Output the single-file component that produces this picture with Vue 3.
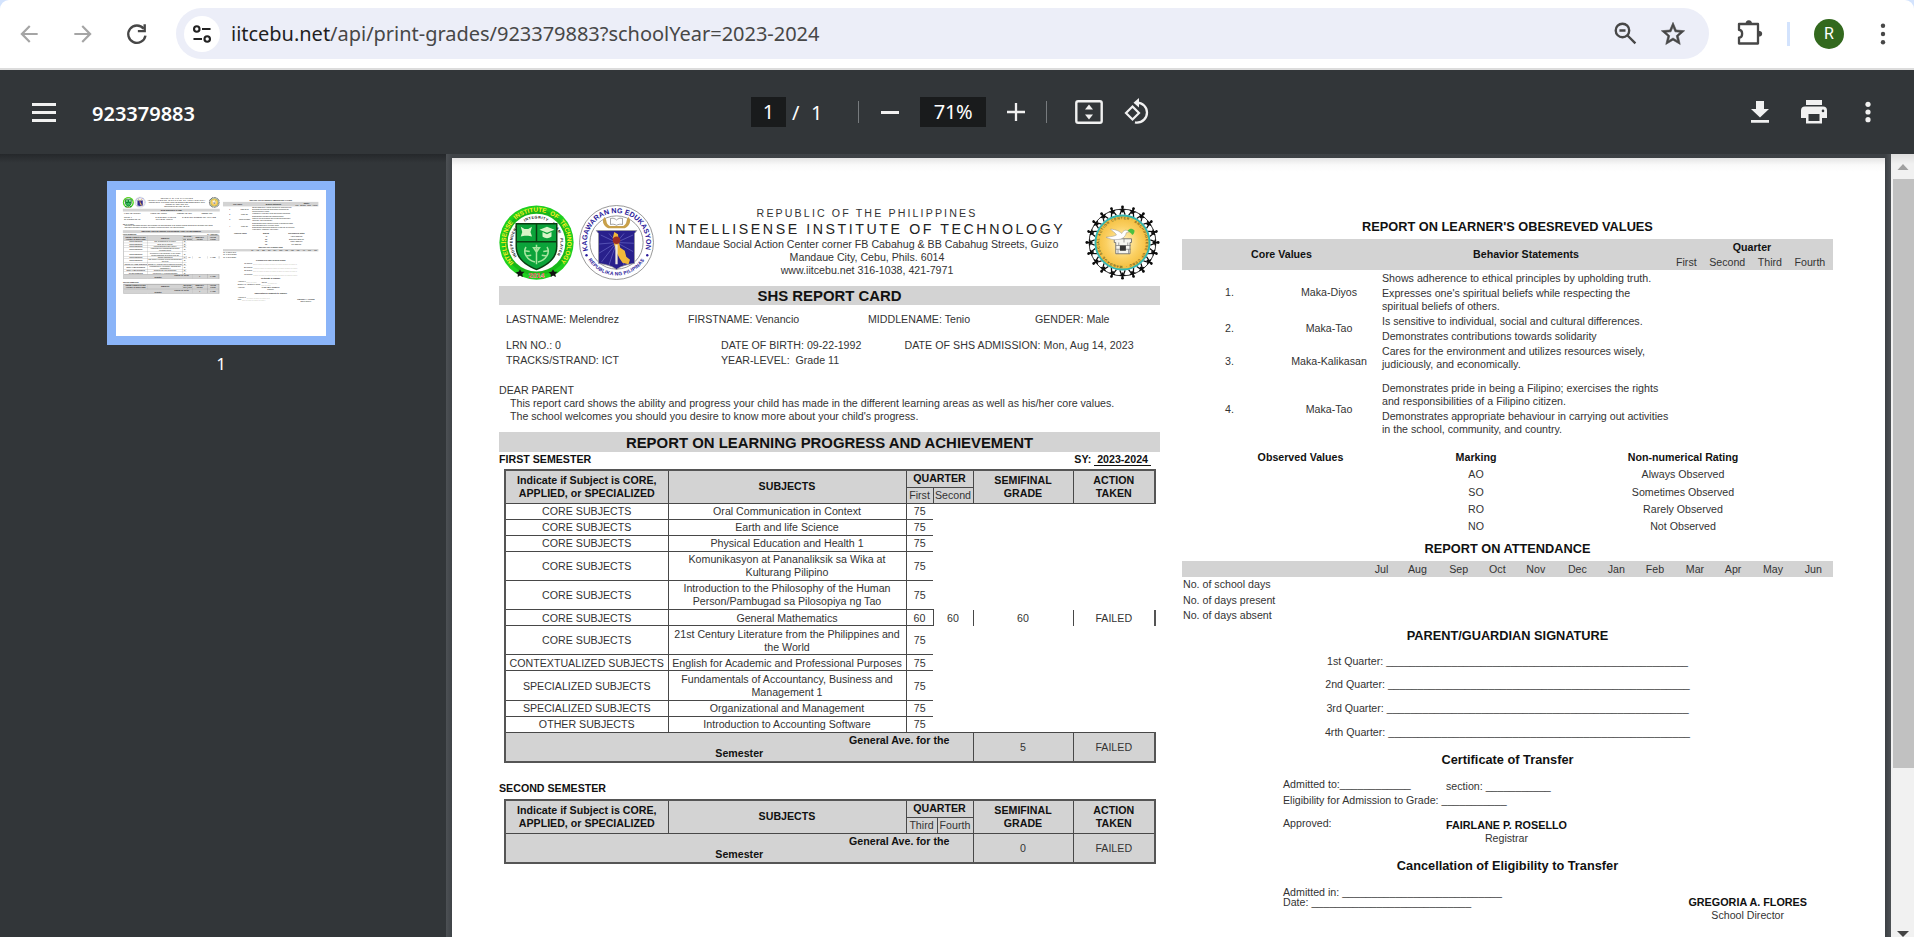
<script setup>
const views = ['thumb', 'main']

const valuesRows = [
  { no: '1.', name: 'Maka-Diyos', groups: [['Shows adherence to ethical principles by upholding truth.'], ["Expresses one's spiritual beliefs while respecting the", 'spiritual beliefs of others.']] },
  { no: '2.', name: 'Maka-Tao', groups: [['Is sensitive to individual, social and cultural differences.'], ['Demonstrates contributions towards solidarity']] },
  { no: '3.', name: 'Maka-Kalikasan', groups: [['Cares for the environment and utilizes resources wisely,', 'judiciously, and economically.']] },
  { no: '4.', name: 'Maka-Tao', groups: [['Demonstrates pride in being a Filipino; exercises the rights', 'and responsibilities of a Filipino citizen.'], ['Demonstrates appropriate behaviour in carrying out activities', 'in the school, community, and country.']] }
]
const ratings = [['AO', 'Always Observed'], ['SO', 'Sometimes Observed'], ['RO', 'Rarely Observed'], ['NO', 'Not Observed']]
const months = ['Jul', 'Aug', 'Sep', 'Oct', 'Nov', 'Dec', 'Jan', 'Feb', 'Mar', 'Apr', 'May', 'Jun']
const line = (n) => '_'.repeat(n)
const signatures = ['1st Quarter:', '2nd Quarter:', '3rd Quarter:', '4rth Quarter:']

const semesters = [
  {
    title: 'FIRST SEMESTER', sy: '2023-2024', q: ['First', 'Second'], cls: 'first', ave: '5',
    rows: [
      ['CORE SUBJECTS', 'Oral Communication in Context', 75],
      ['CORE SUBJECTS', 'Earth and life Science', 75],
      ['CORE SUBJECTS', 'Physical Education and Health 1', 75],
      ['CORE SUBJECTS', 'Komunikasyon at Pananaliksik sa Wika at Kulturang Pilipino', 75, 'tall'],
      ['CORE SUBJECTS', 'Introduction to the Philosophy of the Human Person/Pambugad sa Pilosopiya ng Tao', 75, 'tall'],
      ['CORE SUBJECTS', 'General Mathematics', 60, 'full'],
      ['CORE SUBJECTS', '21st Century Literature from the Philippines and the World', 75, 'tall'],
      ['CONTEXTUALIZED SUBJECTS', 'English for Academic and Professional Purposes', 75],
      ['SPECIALIZED SUBJECTS', 'Fundamentals of Accountancy, Business and Management 1', 75, 'tall'],
      ['SPECIALIZED SUBJECTS', 'Organizational and Management', 75],
      ['OTHER SUBJECTS', 'Introduction to Accounting Software', 75]
    ]
  },
  { title: 'SECOND SEMESTER', sy: '', q: ['Third', 'Fourth'], cls: 'second', ave: '0', rows: [] }
]
</script>

<template>
  <div class="window">
    <header class="browser">
      <svg class="ic back" viewBox="0 0 24 24"><path d="M20 11H7.8l5.6-5.6L12 4l-8 8 8 8 1.4-1.4L7.8 13H20z" /></svg>
      <svg class="ic fwd" viewBox="0 0 24 24"><path d="M4 11h12.2l-5.6-5.6L12 4l8 8-8 8-1.4-1.4 5.6-5.6H4z" /></svg>
      <svg class="ic reload" viewBox="0 0 24 24"><path d="M18.2 7.2A8 8 0 1 0 19.8 13.5" fill="none" stroke="#474747" stroke-width="2.2" /><path d="M20.2 3v7.4h-7.4V8.3h5.2V3z" /></svg>
      <div class="omnibox">
        <span class="site">
          <svg viewBox="0 0 24 24"><g fill="none" stroke="#222" stroke-width="2.3"><circle cx="6.3" cy="6.5" r="3" /><circle cx="17.7" cy="17.5" r="3" /><path d="M12 6.5h9.3M2.7 17.5H12" /></g></svg>
        </span>
        <span class="url"><b>iitcebu.net</b>/api/print-grades/923379883?schoolYear=2023-2024</span>
        <svg class="ic mag" viewBox="0 0 24 24"><g fill="none" stroke="#474747" stroke-width="2.1"><circle cx="9.3" cy="9.3" r="6" /><path d="M13.8 13.8l7 7M6.6 9.3H12" /></g></svg>
        <svg class="ic star" viewBox="0 0 24 24"><path d="M22 9.2l-7.2-.6L12 2 9.2 8.6 2 9.2l5.5 4.7L5.8 21 12 17.3l6.2 3.7-1.6-7.1zM12 15.4l-3.8 2.3 1-4.3-3.3-2.9 4.4-.4L12 6.1l1.7 4 4.4.4-3.3 2.9 1 4.3z" stroke="#474747" stroke-width=".5" /></svg>
      </div>
      <svg class="ic puzzle" viewBox="0 0 28 28"><path d="M3 4H22V23.500H3V17.600C7.200 17.600 7.200 9.900 3 9.900Z" fill="none" stroke="#474747" stroke-width="2.300" stroke-linejoin="round" /><path d="M9.600 4a3.200 3.700 0 0 1 6.400 0zM22 10.800a4.200 3 0 0 1 0 6z" /></svg>
      <span class="bsep"></span>
      <span class="avatar">R</span>
      <svg class="ic bdots" viewBox="0 0 6 24"><circle cx="3" cy="3.800" r="2.200" /><circle cx="3" cy="12" r="2.200" /><circle cx="3" cy="20.200" r="2.200" /></svg>
    </header>

    <div class="toolbar">
      <span class="menu"><i></i><i></i><i></i></span>
      <span class="doc-title">923379883</span>
      <span class="box page-no">1</span>
      <span class="slash">/</span>
      <span class="count">1</span>
      <span class="tsep s1"></span>
      <span class="minus"></span>
      <span class="box zoom">71%</span>
      <svg class="plus" viewBox="0 0 18 18"><path d="M9 0v18M0 9h18" stroke="#f1f1f1" stroke-width="2.300" /></svg>
      <span class="tsep s2"></span>
      <svg class="fit" viewBox="0 0 28 24"><rect x="1.300" y="1.300" width="25.400" height="21.400" rx="1.800" fill="none" stroke="#f1f1f1" stroke-width="2.400" /><path d="M14 4.500l4 5h-8zM14 19.500l4-5h-8z" fill="#f1f1f1" /></svg>
      <svg class="rotate" viewBox="0 0 27 27"><path d="M8.500 8.500L15 15l-6.500 6.500L2 15z" fill="none" stroke="#f1f1f1" stroke-width="2.200" /><path d="M13 4.600a10 10 0 0 1 0 20M16.200 24.200a10 10 0 0 1-5.200 .1" fill="none" stroke="#f1f1f1" stroke-width="2.300" /><path d="M15 0v9.400L9.500 4.700z" fill="#f1f1f1" /></svg>
      <svg class="down" viewBox="0 0 18 22"><path d="M18 8h-5V0H5v8H0l9 8.500zM0 19h18v2.700H0z" fill="#f1f1f1" /></svg>
      <svg class="print" viewBox="0 0 26 24"><path d="M5 0h16v5H5zM22 6.500H4a4 4 0 0 0-4 4V18h5v5.500h16V18h5v-7.500a4 4 0 0 0-4-4zM18.500 21h-11v-7h11zM22 12.200a1.300 1.300 0 1 1 0-2.600 1.300 1.300 0 0 1 0 2.600z" fill="#f1f1f1" fill-rule="evenodd" /></svg>
      <svg class="tdots" viewBox="0 0 6 22"><g fill="#f1f1f1"><circle cx="3" cy="3.300" r="2.600" /><circle cx="3" cy="11" r="2.600" /><circle cx="3" cy="18.700" r="2.600" /></g></svg>
    </div>

    <div class="body">
      <div v-for="v in views" :key="v" :class="['pane', v]">
        <div class="frame">
          <div class="sheet">
            <section class="left">
              <div class="head">
                <svg class="logo" viewBox="0 0 100 100">
                  <defs>
                    <path :id="v + 'a'" d="M19.500 77.400A41 41 0 1 1 80.500 77.400" />
                    <path :id="v + 'b'" d="M23.800 68.400A32 32 0 1 1 76.200 68.400" />
                  </defs>
                  <circle cx="50" cy="50" r="49.500" fill="#1fd01f" />
                  <circle cx="50" cy="50" r="41" fill="none" stroke="#18b818" stroke-width="6" />
                  <circle cx="50" cy="50" r="38.500" fill="#fff" />
                  <text class="ring" font-size="8.400" fill="#ffee22" word-spacing="3"><textPath :href="'#' + v + 'a'" textLength="187">INTELLISENSE INSTITUTE OF TECHNOLOGY</textPath></text>
                  <text class="ring" font-size="5" fill="#111" word-spacing="4"><textPath :href="'#' + v + 'b'" textLength="137">INDEPENDENCE INTEGRITY TEAM PLAYER</textPath></text>
                  <path d="M22 24h56v31c0 18-14 26-28 32-14-6-28-14-28-32z" fill="#0a3d12" />
                  <path d="M24 26h25v22H24zM51 26h25v22H51zM24 50h52v5c0 16-12 24-26 30-14-6-26-14-26-30z" fill="#0ba33a" />
                  <path d="M29 29l5 3h5l5-3-2 7 2 6-5-1h-5l-5 1 2-6zM54 33l10-4 10 4-10 4zM58 36v6c4 3 8 3 12 0v-6l-6 3z" fill="#d8f5c8" />
                  <path d="M50 53v26M46 57h8l-4 6zM36 56c-5 8 2 18 12 20M64 56c5 8-2 18-12 20M34 61l7 1M36 68l7-1M66 61l-7 1M64 68l-7-1" fill="none" stroke="#a8e6a0" stroke-width="2" />
                  <text x="50" y="97" text-anchor="middle" class="ring" font-size="9.500" fill="#e02020" stroke="#fff" stroke-width=".3">2014</text>
                  <path d="M28 86l2 3 4 0-3 3 1 4-4-2-3 2 0-4-3-2 4-1zM72 86l2 3 4 0-3 3 1 4-4-2-3 2 0-4-3-2 4-1z" fill="#111" />
                </svg>
                <svg class="logo second-logo" viewBox="0 0 100 100">
                  <defs>
                    <path :id="v + 'c'" d="M12 61A39.500 39.500 0 1 1 88 61" />
                    <path :id="v + 'd'" d="M12.500 73A44 44 0 0 0 87.500 73" />
                  </defs>
                  <circle cx="50" cy="50" r="49.300" fill="#fff" stroke="#777" stroke-width="1" />
                  <circle cx="50" cy="50" r="35.500" fill="none" stroke="#777" stroke-width="1" />
                  <text class="ring" font-size="9.500" fill="#2a1a9a"><textPath :href="'#' + v + 'c'" textLength="144">KAGAWARAN NG EDUKASYON</textPath></text>
                  <text class="ring" font-size="6.600" fill="#2a1a9a"><textPath :href="'#' + v + 'd'" textLength="89">REPUBLIKA NG PILIPINAS</textPath></text>
                  <circle cx="10" cy="67" r="1.600" fill="#2a1a9a" /><circle cx="91" cy="67" r="1.600" fill="#2a1a9a" />
                  <path d="M23 34h54l-3 4v40c-9 1-18 3-24 8-6-5-15-7-24-8V38z" fill="#28208c" stroke="#999" stroke-width="1" />
                  <path d="M50 50L29 40M50 50L40 38M50 50L60 38M50 50L72 40M50 50L27 52M50 50L27 64M50 50L30 76M50 50L40 80M50 50L60 80M50 50L72 62M50 50L73 51" stroke="#7272cc" stroke-width=".8" />
                  <path d="M47 36l5 3 1 10 2 8 6 4 2 8 5 4-2 6-8-2-4-6-4-8-3-10-2-9z" fill="#f0b93a" />
                  <circle cx="50" cy="47" r="5" fill="#9c2f25" /><path d="M48.500 53h3v26h-3z" fill="#ece7e0" />
                  <path d="M34 16c4 4 1 9 7 12h18c6-3 3-8 7-12 5 6 0 13-5 15H39c-5-2-10-9-5-15z" fill="#c8a04a" />
                  <path d="M42 18c3-1 6 0 8 2 2-2 5-3 8-2v8c-3-1-6 0-8 1-2-1-5-2-8-1z" fill="#fff" stroke="#666" stroke-width=".8" />
                </svg>
                <div class="school">
                  <p class="republic">REPUBLIC OF THE PHILIPPINES</p>
                  <p class="iit">INTELLISENSE INSTITUTE OF TECHNOLOGY</p>
                  <p class="addr">Mandaue Social Action Center corner FB Cabahug &amp; BB Cabahug Streets, Guizo</p>
                  <p>Mandaue City, Cebu, Phils. 6014</p>
                  <p>www.iitcebu.net 316-1038, 421-7971</p>
                </div>
                <svg class="logo third-logo" viewBox="0 0 100 100">
                  <defs>
                    <radialGradient :id="v + 'g'"><stop offset="0" stop-color="#fff6cf" /><stop offset=".6" stop-color="#fbd062" /><stop offset="1" stop-color="#f3bd3c" /></radialGradient>
                    <path :id="v + 'e'" d="M50 81A31 31 0 1 1 50.100 81" />
                  </defs>
                  <circle cx="50" cy="50" r="44.500" fill="none" stroke="#222" stroke-width="1.200" />
                  <g v-for="n in 20" :key="n" :transform="`rotate(${n * 18} 50 50)`">
                    <path d="M50 3.500L46.500 13M50 3.500L53.500 13M50 4v6M46 6L50 7 54 6" stroke="#0c0c0c" stroke-width="1.700" fill="none" /><circle cx="50" cy="2.500" r="1.900" fill="#0c0c0c" />
                  </g>
                  <circle cx="50" cy="50" r="36" :fill="`url(#${v}g)`" stroke="#35b5ae" stroke-width="2.600" />
                  <text class="ring" font-size="4.600" fill="#6b5a1a"><textPath :href="'#' + v + 'e'" textLength="190">MANDAUE SOCIAL ACTION CENTER · ARCHDIOCESE OF CEBU ·</textPath></text>
                  <path d="M39 45h23v5h-2v15H41V50h-2z" fill="#f5f5f0" stroke="#666" stroke-width="1.100" />
                  <path d="M41 54h20M41 59h20M45 50v4M52 45v5M57 50v4M44 59v6M58 59v6" stroke="#777" stroke-width=".9" />
                  <path d="M46.500 54h8v7h-8z" fill="#333" />
                  <path d="M28 43c7-1 10-1 14-3-2-4-6-5-8-8 8 1 12 3 15 6 2-4 5-5 7-4l3 2-4 1c-1 6-6 9-12 9-6 1-10-1-15-3z" fill="#fff" stroke="#999" stroke-width=".7" />
                  <path d="M57 34c3-3 6-3 9 0 0 3-1 5-3 6-1-3-4-3-6-6z" fill="#4bc041" />
                </svg>
              </div>
              <h2 class="bar">SHS REPORT CARD</h2>
              <div class="names"><span>LASTNAME: Melendrez</span><span>FIRSTNAME: Venancio</span><span>MIDDLENAME: Tenio</span><span>GENDER: Male</span></div>
              <div class="info"><span>LRN NO.: 0</span><span>DATE OF BIRTH: 09-22-1992</span><span class="adm">DATE OF SHS ADMISSION: Mon, Aug 14, 2023</span><span>TRACKS/STRAND: ICT</span><span>YEAR-LEVEL:&nbsp; Grade 11</span></div>
              <div class="dear">
                <p>DEAR PARENT</p>
                <p class="ind">This report card shows the ability and progress your child has made in the different learning areas as well as his/her core values.</p>
                <p class="ind">The school welcomes you should you desire to know more about your child's progress.</p>
              </div>
              <h2 class="bar bar2">REPORT ON LEARNING PROGRESS AND ACHIEVEMENT</h2>
              <div v-for="s in semesters" :key="s.title" :class="['semester', s.cls]">
                <div class="sem-head"><b>{{ s.title }}</b><b v-if="s.sy">SY: <u>&nbsp;{{ s.sy }}&nbsp;</u></b></div>
                <table>
                  <colgroup><col class="c1" /><col class="c2" /><col class="c3" /><col class="c4" /><col class="c5" /><col class="c6" /></colgroup>
                  <tbody>
                    <tr class="h1">
                      <th rowspan="2">Indicate if Subject is CORE,<br />APPLIED, or SPECIALIZED</th>
                      <th rowspan="2">SUBJECTS</th>
                      <th colspan="2">QUARTER</th>
                      <th rowspan="2">SEMIFINAL<br />GRADE</th>
                      <th rowspan="2" class="last">ACTION<br />TAKEN</th>
                    </tr>
                    <tr class="h2"><td v-for="q in s.q" :key="q" class="grey">{{ q }}</td></tr>
                    <tr v-for="r in s.rows" :key="r[1]" :class="['row', r[3]]">
                      <td class="kind">{{ r[0] }}</td>
                      <td>{{ r[1] }}</td>
                      <td class="q1">{{ r[2] }}</td>
                      <template v-if="r[3] === 'full'"><td class="v">60</td><td class="v">60</td><td class="v last">FAILED</td></template>
                      <td v-else colspan="3" class="none"></td>
                    </tr>
                    <tr class="ave">
                      <th colspan="4"><span class="gen">General Ave. for the</span><br />Semester</th>
                      <td class="grey">{{ s.ave }}</td>
                      <td class="grey last">FAILED</td>
                    </tr>
                  </tbody>
                </table>
              </div>
            </section>

            <section class="right">
              <h3 class="t-values">REPORT ON LEARNER'S OBESREVED VALUES</h3>
              <div class="vhead">
                <b>Core Values</b><b>Behavior Statements</b>
                <div class="quarter"><b>Quarter</b><div><span>First</span><span>Second</span><span>Third</span><span>Fourth</span></div></div>
              </div>
              <div class="vrows">
                <div v-for="(r, i) in valuesRows" :key="i" :class="['vrow', 'r' + i]">
                  <span class="no">{{ r.no }}</span><span class="nm">{{ r.name }}</span>
                  <div class="st"><div v-for="(g, j) in r.groups" :key="j" class="grp"><p v-for="t in g" :key="t">{{ t }}</p></div></div>
                </div>
              </div>
              <div class="rating"><b>Observed Values</b><b>Marking</b><b>Non-numerical Rating</b></div>
              <div v-for="r in ratings" :key="r[0]" class="rating item"><span></span><span>{{ r[0] }}</span><span>{{ r[1] }}</span></div>
              <h3 class="t-att">REPORT ON ATTENDANCE</h3>
              <div class="months"><i></i><span v-for="m in months" :key="m">{{ m }}</span></div>
              <div class="days"><p>No. of school days</p><p>No. of days present</p><p>No. of days absent</p></div>
              <h3 class="t-sig">PARENT/GUARDIAN SIGNATURE</h3>
              <div class="sigs"><p v-for="q in signatures" :key="q">{{ q }} {{ line(51) }}</p></div>
              <h3 class="t-cert">Certificate of Transfer</h3>
              <div class="cert">
                <span>Admitted to:{{ line(12) }}</span><span class="sec">section: {{ line(11) }}</span>
                <span class="elig">Eligibility for Admission to Grade: {{ line(11) }}</span>
                <span class="appr">Approved:</span>
                <div class="person"><b>FAIRLANE P. ROSELLO</b><p>Registrar</p></div>
              </div>
              <h3 class="t-cancel">Cancellation of Eligibility to Transfer</h3>
              <div class="cancel">
                <div><p>Admitted in: {{ line(27) }}</p><p class="date">Date: {{ line(27) }}</p></div>
                <div class="person director"><b>GREGORIA A. FLORES</b><p>School Director</p></div>
              </div>
            </section>
          </div>
        </div>
        <div v-if="v === 'thumb'" class="thumb-no">1</div>
      </div>
      <div class="scroll">
        <svg class="up" viewBox="0 0 23 24"><path d="M12 10l5.500 6h-11z" fill="#a0a0a0" /></svg>
        <div class="grip"></div>
        <svg class="dn" viewBox="0 0 23 7"><path d="M6 1h12l-6 6z" fill="#444" /></svg>
      </div>
    </div>
  </div>
</template>

<style>
html, body { margin: 0; overflow: hidden; }
</style>

<style scoped>
* { box-sizing: border-box; }
p, h2, h3 { margin: 0; }
svg { display: block; flex: none; overflow: visible; }
.window { width: 1914px; height: 937px; display: flex; flex-direction: column; overflow: hidden; background: #d3e3fd; font-family: "Liberation Sans", Arial, sans-serif; }

.browser { height: 70px; flex: none; background: #fff; border-bottom: 2px solid #dcdcdc; border-radius: 9px 9px 0 0; display: flex; align-items: center; padding-bottom: 1px; font-family: "Noto Sans", sans-serif; }
.ic { width: 28px; height: 28px; fill: #474747; }
.back, .fwd { width: 26px; height: 26px; fill: #a5a5a5; }
.back { margin-left: 16px; }
.fwd { margin-left: 28px; }
.reload { width: 26px; height: 26px; margin-left: 28px; }
.omnibox { width: 1533px; height: 51px; margin-left: 26px; border-radius: 26px; background: #eceef8; display: flex; align-items: center; }
.site { width: 36px; height: 36px; margin-left: 8px; border-radius: 50%; background: #fff; display: grid; place-items: center; }
.site svg { width: 22px; height: 22px; }
.url { margin-left: 11px; width: 1365px; font-size: 20px; letter-spacing: -.02px; color: #474747; white-space: nowrap; }
.url b { font-weight: 400; color: #1f1f1f; }
.mag { margin-left: 16px; width: 27px; height: 27px; }
.star { margin-left: 20px; width: 28px; height: 28px; }
.puzzle { margin-left: 27px; }
.bsep { width: 3px; height: 24px; margin-left: 23px; background: #d3e3fd; }
.avatar { width: 30px; height: 30px; margin-left: 24px; border-radius: 50%; background: #33691e; color: #fff; font: 16px/30px Roboto, sans-serif; text-align: center; }
.bdots { width: 6px; height: 24px; margin-left: 36px; }

.toolbar { height: 84px; flex: none; display: flex; align-items: center; color: #fff; background: #323639; font: 20px/30px "Noto Sans", sans-serif; }
.menu { width: 24px; margin-left: 32px; display: flex; flex-direction: column; gap: 5px; }
.menu i { height: 3px; background: #f1f1f1; }
.doc-title { width: 659px; margin-left: 36px; font-weight: 600; margin-top: 3px; }
.box { height: 30px; background: #191b1c; text-align: center; }
.page-no { width: 35px; }
.slash { margin-left: 6px; width: 19px; margin-top: 2px; }
.count { width: 13px; margin-top: 2px; }
.tsep { width: 1px; height: 22px; background: #777b7e; }
.s1 { margin-left: 34px; }
.minus { width: 18px; height: 3px; margin-left: 22px; background: #f1f1f1; }
.zoom { width: 66px; margin-left: 21px; letter-spacing: -.4px; }
.plus { width: 18px; height: 18px; margin-left: 21px; }
.s2 { margin-left: 21px; }
.fit { width: 28px; height: 24px; margin-left: 28px; }
.rotate { width: 27px; height: 27px; margin: 0 0 2px 21px; }
.down { width: 18px; height: 22px; margin-left: 600px; }
.print { width: 26px; height: 24px; margin-left: 32px; }
.tdots { width: 6px; height: 22px; margin-left: 38px; }

.body { flex: 1; min-height: 0; display: flex; background: #323639; }
.pane { overflow: hidden; }
.thumb { width: 446px; flex: none; padding: 27px 0 0 107px; background: linear-gradient(#25282b, #323639 9px); }
.thumb .frame { width: 228px; height: 164px; border: 9px solid #8ab4f8; background: #fff; overflow: hidden; }
.thumb .sheet { transform: scale(.14655); transform-origin: 0 0; color: #000; }
.thumb-no { width: 228px; margin-top: 7px; text-align: center; color: #fff; font: 17px/24px "Noto Sans", sans-serif; }
.main { width: 1445px; flex: none; padding: 4px 6px 0; background: linear-gradient(90deg, #4d5155, #3f4347 6px, #3c4044 1439px, #4d5155); }
.main .sheet { background: linear-gradient(#e4e4e4, #fafafa 7px, #fff 14px); }
.sheet { width: 1433px; height: 996px; display: flex; padding: 47px 0 0 47px; background: #fff; color: #333; font-size: 10.65px; line-height: 13px; white-space: nowrap; }
.scroll { flex: none; width: 23px; background: #f1f1f1; display: flex; flex-direction: column; }
.up { width: 23px; height: 24px; background: linear-gradient(#ddd, #f1f1f1 10px); }
.grip { height: 589px; margin: 1px 0 0 2px; background: #c1c1c1; }
.dn { width: 23px; height: 7px; margin-top: auto; }

.left { width: 661px; }
.right { width: 651px; margin-left: 22px; }
.head { height: 81px; display: flex; }
.logo { width: 75px; height: 75px; }
.second-logo { margin-left: 5px; }
.ring { font-family: "Liberation Sans", Arial, sans-serif; font-weight: 700; }
.school { flex: 1; margin-right: 5px; padding-top: .6px; text-align: center; display: flex; flex-direction: column; align-items: center; }
.republic { line-height: 14px; letter-spacing: 2.120px; }
.iit { font-size: 14.200px; line-height: 18px; letter-spacing: 2.570px; color: #222; }
.bar { height: 19px; background: #d3d3d3; text-align: center; font-size: 14.920px; line-height: 20px; color: #111; }
.names { height: 27px; padding: 1px 0 0 7px; display: grid; grid-template-columns: 182px 180px 167px 1fr; align-items: center; }
.info { margin-top: 6px; padding-left: 7px; display: grid; grid-template-columns: 215px 183.500px 1fr; grid-auto-rows: 15px; align-items: center; }
.adm { letter-spacing: .04px; }
.dear { margin-top: 16px; }
.ind { padding-left: 11px; }
.bar2 { margin-top: 9px; height: 20px; line-height: 21px; }
.sem-head { height: 13px; display: flex; justify-content: space-between; padding-right: 9px; line-height: 14px; }
.sem-head b { color: #111; }
.sem-head u { text-decoration: none; display: inline-block; height: 14px; border-bottom: 1px solid #111; }
.second { margin-top: 18px; }
.semester table { margin: 4px 0 0 5px; width: 650px; table-layout: fixed; border-collapse: collapse; font-size: 10.65px; line-height: 13px; color: inherit; text-align: center; }
.second .sem-head { margin-bottom: 5px; }
.c1 { width: 163px; } .c2 { width: 238px; } .c3 { width: 27px; } .c4 { width: 40px; } .c5 { width: 100px; } .c6 { width: 82px; }
.second .c3 { width: 31px; } .second .c4 { width: 36px; }
td, th { padding: 0; border: 1px solid #484848; white-space: normal; overflow: hidden; }
td { height: 16px; }
th { background: #d3d3d3; color: #111; }
.grey { background: #d3d3d3; }
.kind { white-space: nowrap; }
.h1 th { border-top: 2px solid #555; }
tr > :first-child:not(.grey) { border-left: 2px solid #555; }
.h1 { height: 17px; } .h2 { height: 16px; }
.last { border-right: 2px solid #555 !important; }
.row td { padding-top: 1px; }
.tall td { height: 29.300px; }
td.none { border: 0; }
.q1 { border-right: 0; }
.full .q1 { border-right: 1px solid #484848; }
td.v { border-width: 0 1px; }
.ave > * { height: 30px; padding-top: 1px; border-bottom: 2px solid #555; }
.gen { padding-left: 320px; display: inline-block; }
.ave th { white-space: nowrap; }

h3 { font-size: 12.780px; line-height: 15px; text-align: center; color: #111; }
.t-values { margin-top: 14px; }
.vhead { height: 31px; margin-top: 5px; background: #d3d3d3; display: grid; grid-template-columns: 199px 290px 162px; align-items: center; text-align: center; }
.vhead b, .rating b { color: #111; }
.quarter { padding-top: 1px; }
.quarter div { display: flex; gap: 12.500px; padding-left: 5px; margin-top: 2px; }
.vrow { display: grid; grid-template-columns: 95px 104px 1fr; align-items: center; text-align: center; }
.vrow .st { text-align: left; padding-left: 1px; }
.grp + .grp { margin-top: 2px; }
.r0 { margin-top: 1.500px; }
.r1 { margin-top: 2px; }
.r2 { margin-top: 2px; }
.r2 p { line-height: 13.500px; }
.r2 .no, .r2 .nm { padding-top: 7px; }
.r3 { margin-top: 10.500px; }
.rating { display: grid; grid-template-columns: 237px 114px 300px; text-align: center; margin-top: 15px; line-height: 13px; }
.item { margin-top: 4.300px; }
.t-att { margin-top: 8px; }
.months { height: 16px; margin-top: 5px; background: #d3d3d3; display: grid; grid-template-columns: 181.600px 36px 35.800px 46.600px 30.800px 46px 37.200px 40.600px 36.800px 43.200px 33.200px 46.400px 34.400px; align-items: center; text-align: center; }
.days { padding: 0 0 0 1px; }
.days p { line-height: 15.500px; }
.t-sig { margin-top: 4px; }
.sigs { margin-top: 12px; text-align: center; }
.sigs p { height: 23.700px; }
.t-cert { margin-top: 3px; }
.cert { margin: 11px 0 0 101px; display: grid; grid-template-columns: 163px 121px; grid-template-rows: 16px 15px 39px; }
.sec { padding-top: 2px; }
.elig { grid-column: 1 / 3; }
.appr { padding-top: 8px; }
.person { text-align: center; }
.cert .person { padding-top: 10px; }
.person b { color: #111; font-size: 10.800px; display: block; }
.t-cancel { margin-top: 10px; }
.cancel { margin: 13px 0 0 101px; display: flex; justify-content: space-between; padding-right: 26px; }
.date { margin-top: -3px; }
.director { padding-top: 10px; }
</style>
